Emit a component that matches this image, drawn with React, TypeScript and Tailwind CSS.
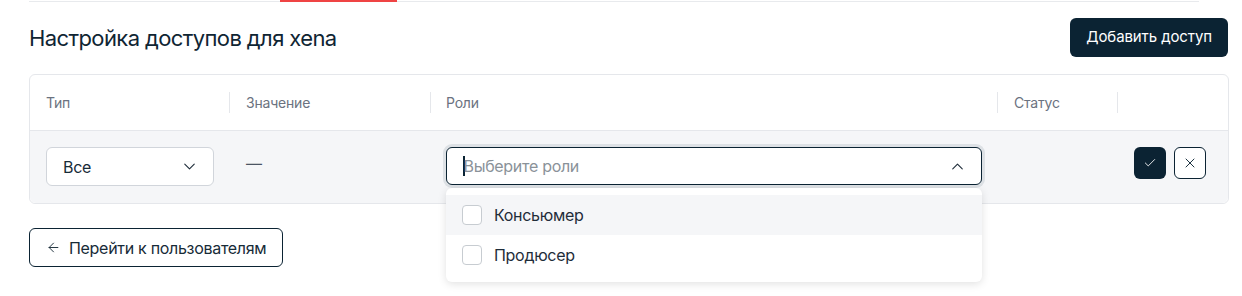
import React from "react";
import { ChevronDown, ChevronUp, Check, X, ArrowLeft } from "lucide-react";

export default function App() {
  return (
    <div
      className="w-[1242px] h-[296px] bg-white overflow-hidden text-[#0b2333]"
      style={{ fontFamily: "Inter, 'Noto Sans', sans-serif" }}
    >
      <div className="mx-[29px] relative h-[2px]">
        <div className="absolute left-0 right-[14px] top-[1px] h-[1px] bg-[#e8eaed]" />
        <div className="absolute left-[251px] w-[117px] top-0 h-[2px] bg-[#ef4444]" />
      </div>
      <div className="mx-[29px] mr-[14px] mt-[16px] h-[39px] flex items-center justify-between">
        <h1 className="text-[22px] leading-none tracking-[-0.6px] text-[#0f2533] pt-[1px]">
          Настройка доступов для xena
        </h1>
        <button className="h-[39px] px-[16px] rounded-[6px] bg-[#0b2333] text-white text-[15px] tracking-[-0.1px]">
          Добавить доступ
        </button>
      </div>

      <div className="ml-[29px] w-[1200px] mt-[17px] border border-[#e5e7eb] rounded-[6px] relative">
        <div className="flex h-[56px] items-center text-[14px] text-[#6b7280] tracking-[-0.2px] border-b border-[#e5e7eb]">
          <div className="w-[199px] pl-[16px]">Тип</div>
          <div className="w-[201px] h-[21px] flex items-center border-l border-[#e5e7eb] pl-[16px]">Значение</div>
          <div className="w-[567px] h-[21px] flex items-center border-l border-[#e5e7eb] pl-[15px]">Роли</div>
          <div className="w-[120px] h-[21px] flex items-center border-l border-[#e5e7eb] pl-[16px]">Статус</div>
          <div className="flex-1 h-[21px] border-l border-[#e5e7eb]" />
        </div>
        <div className="flex h-[72px] bg-[#f5f6f8] rounded-b-[6px] text-[16px] tracking-[-0.3px]">
          <div className="w-[199px] pl-[16px] pt-[16px]">
            <div className="w-[168px] h-[39px] bg-white border border-[#d1d5db] rounded-[6px] flex items-center justify-between pl-[16px] pr-[14px] text-[#172b38]">
              <span>Все</span>
              <ChevronDown size={19} strokeWidth={1.4} className="text-[#1f2d3a]" />
            </div>
          </div>
          <div className="w-[201px] pl-[17px] pt-[20px] text-[#4b5563]">—</div>
          <div className="w-[567px] pl-[16px] pr-[15px] pt-[16px] relative">
            <div className="h-[38px] bg-white border border-[#0b2333] rounded-[6px] ring-[3px] ring-[#dde1e5] flex items-center justify-between pl-[16px] pr-[14px]">
              <span className="flex items-center text-[#8a9299]">
                <span className="w-[1.5px] h-[20px] bg-[#0b2333] -mr-[1px]" />
                Выберите роли
              </span>
              <ChevronUp size={19} strokeWidth={1.4} className="text-[#1f2d3a]" />
            </div>
            <div className="absolute left-[16px] right-[15px] top-[57px] bg-white rounded-[6px] shadow-[0_2px_8px_rgba(0,0,0,0.12)] py-[7px] z-10">
              <div className="h-[40px] bg-[#f5f6f8] flex items-center pl-[16px] text-[#1f2d3a]">
                <span className="w-[20px] h-[20px] rounded-[4px] border border-[#c7ccd1] bg-white mr-[12px]" />
                Консьюмер
              </div>
              <div className="h-[40px] flex items-center pl-[16px] text-[#1f2d3a]">
                <span className="w-[20px] h-[20px] rounded-[4px] border border-[#c7ccd1] bg-white mr-[12px]" />
                Продюсер
              </div>
            </div>
          </div>
          <div className="w-[120px]" />
          <div className="flex-1 flex justify-end items-start pt-[16px] pr-[22px] gap-[8px]">
            <button className="w-[32px] h-[32px] rounded-[6px] bg-[#0b2333] flex items-center justify-center">
              <Check size={14} strokeWidth={1.5} className="text-white" />
            </button>
            <button className="w-[32px] h-[32px] rounded-[6px] border border-[#0b2333] bg-white flex items-center justify-center">
              <X size={16} strokeWidth={1.4} className="text-[#0b2333]" />
            </button>
          </div>
        </div>
      </div>

      <div className="ml-[29px] mt-[24px]">
        <button className="h-[39px] pl-[16px] pr-[16px] rounded-[6px] border border-[#0b2333] flex items-center gap-[8px] text-[16px] tracking-[-0.3px] text-[#172b38]">
          <ArrowLeft size={15} strokeWidth={1.5} />
          Перейти к пользователям
        </button>
      </div>
    </div>
  );
}
